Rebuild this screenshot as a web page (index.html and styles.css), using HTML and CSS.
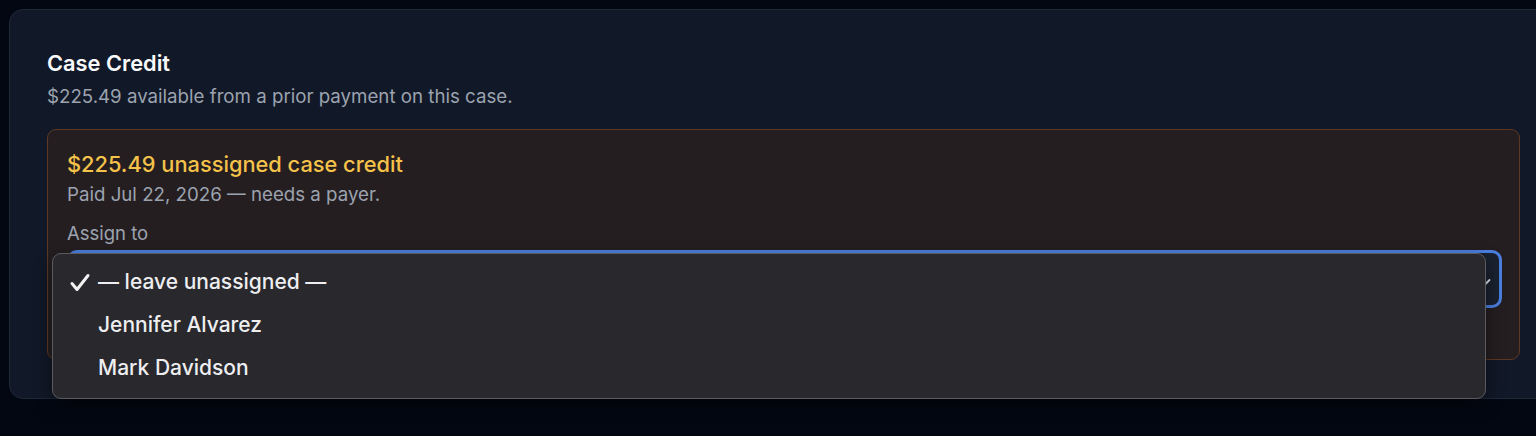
FILE: index.html
```html
<!DOCTYPE html>
<html lang="en">
<head>
<meta charset="utf-8">
<title>Case Credit</title>
<link rel="stylesheet" href="styles.css">
</head>
<body>
  <section class="card">
    <h2 class="card-title">Case Credit</h2>
    <p class="card-sub">$225.49 available from a prior payment on this case.</p>

    <div class="credit">
      <div class="credit-title">$225.49 unassigned case credit</div>
      <div class="credit-meta">Paid Jul 22, 2026 — needs a payer.</div>
      <label class="field-label">Assign to</label>
      <div class="select-wrap">
        <div class="select">
          <svg class="chevron" width="16" height="16" viewBox="0 0 16 16" fill="none" stroke="#e5e7eb" stroke-width="1.8" stroke-linecap="round" stroke-linejoin="round"><path d="M3.5 6l4.5 4.5L12.5 6"/></svg>
        </div>
        <ul class="menu">
          <li class="menu-item selected">
            <svg class="check" width="22" height="20" viewBox="0 0 22 20" fill="none" stroke="#f2f2f2" stroke-width="3" stroke-linecap="round" stroke-linejoin="round"><path d="M3 10.5l5 6L19 2.5"/></svg>
            <span>— leave unassigned —</span>
          </li>
          <li class="menu-item"><span>Jennifer Alvarez</span></li>
          <li class="menu-item"><span>Mark Davidson</span></li>
        </ul>
      </div>
      <div class="actions"></div>
    </div>
  </section>
</body>
</html>
```

FILE: styles.css
```css
html, body {
  margin: 0;
  overflow: hidden;
}

body {
  background: #030712;
  font-family: Inter, "Noto Sans", sans-serif;
  padding: 9px 0 0 9px;
  height: 436px;
  box-sizing: border-box;
}

.card {
  width: 1549px;
  box-sizing: border-box;
  background: #111827;
  border: 1px solid #1f2937;
  border-radius: 14px;
  padding: 39px 37px 38px;
}

.card-title {
  margin: 0;
  font-size: 21.8px;
  line-height: 28px;
  font-weight: 600;
  color: #f9fafb;
}

.card-sub {
  margin: 8px 0 0;
  font-size: 18.7px;
  line-height: 24px;
  color: #9ca3af;
}

.credit {
  margin-top: 20px;
  width: 1473px;
  box-sizing: border-box;
  background: #241e21;
  border: 1px solid #5e3822;
  border-radius: 9px;
  padding: 20px 19px 0;
  height: 231px;
}

.credit-title {
  font-size: 21.8px;
  line-height: 28px;
  font-weight: 500;
  color: #f5c24a;
}

.credit-meta {
  margin-top: 5px;
  font-size: 18.7px;
  line-height: 24px;
  color: #9ca3af;
}

.field-label {
  display: block;
  margin-top: 14px;
  font-size: 18.5px;
  line-height: 24px;
  color: #9ca3af;
}

.select-wrap {
  position: relative;
  margin-top: 5px;
}

.select {
  height: 58px;
  box-sizing: border-box;
  margin-right: -2px;
  border: 3px solid #4a7fe0;
  border-radius: 10px;
  background: #1a2230;
  display: flex;
  align-items: center;
  justify-content: flex-end;
  padding: 0 6px 0 16px;
}

.chevron {
  flex: none;
  margin-top: 6px;
}

.menu {
  position: absolute;
  left: -15px;
  top: 3px;
  width: 1434px;
  height: 146px;
  box-sizing: border-box;
  margin: 0;
  padding: 6px 0 11px;
  list-style: none;
  background: #28282d;
  border: 1px solid #5b5b60;
  border-radius: 9px;
  box-shadow: 0 6px 18px rgba(0, 0, 0, 0.45);
}

.menu-item {
  height: 43px;
  display: flex;
  align-items: center;
  padding-left: 45px;
  position: relative;
  font-size: 21px;
  font-weight: 500;
  color: #eeeef0;
}

.check {
  position: absolute;
  left: 16px;
  top: 13px;
}
```
